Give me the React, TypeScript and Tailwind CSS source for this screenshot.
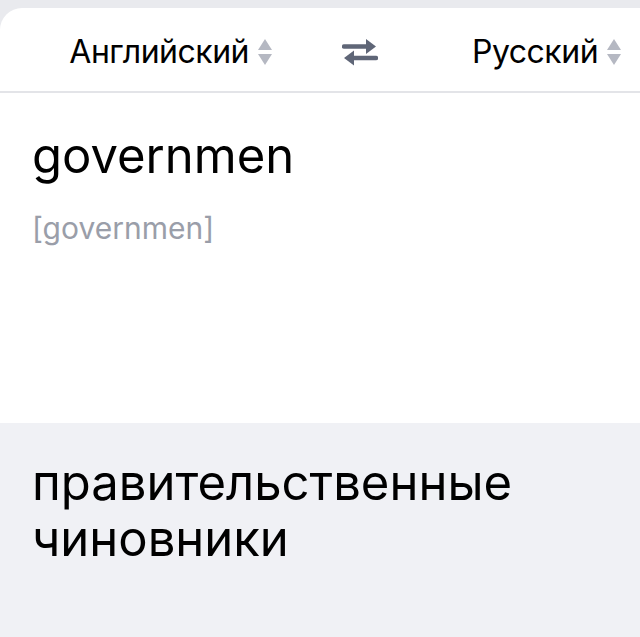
function SortIcon() {
  return (
    <svg width="16" height="28" viewBox="0 0 16 28" className="shrink-0">
      <path d="M8 1 L15 12 H1 Z" fill="#b5b8c2" />
      <path d="M8 27 L15 16 H1 Z" fill="#b5b8c2" />
    </svg>
  )
}

function SwapIcon() {
  return (
    <svg width="36" height="30" viewBox="0 0 36 30">
      <path d="M2 9.5 H27" stroke="#5f6677" strokeWidth="4.5" strokeLinecap="round" />
      <path d="M24 2 L34 9.5 L24 17 Z" fill="#5f6677" />
      <path d="M34 21 H9" stroke="#5f6677" strokeWidth="4.5" strokeLinecap="round" />
      <path d="M12 13.5 L2 21 L12 28.5 Z" fill="#5f6677" />
    </svg>
  )
}

export default function App() {
  return (
    <div className="min-h-[637px] w-[640px] bg-[#e9eaee] pt-2 font-['Inter','Roboto',sans-serif] text-black">
      <div className="rounded-tl-[22px] bg-white">
        {/* language picker */}
        <div className="flex h-[85px] items-center border-b-2 border-[#e3e4e8] pt-[4px]">
          <div className="flex w-[280px] items-center justify-end gap-[8px] pr-[7px]">
            <span className="text-[32px] tracking-[-0.5px]">Английский</span>
            <SortIcon />
          </div>
          <div className="flex w-[160px] justify-center">
            <SwapIcon />
          </div>
          <div className="flex items-center gap-[8px] pl-[32px]">
            <span className="text-[32px] tracking-[-0.5px]">Русский</span>
            <SortIcon />
          </div>
        </div>

        {/* source text */}
        <div className="h-[330px] px-8 pt-[35px]">
          <div className="text-[49px] leading-[56px]">governmen</div>
          <div className="mt-[24px] text-[30px] leading-[40px] text-[#9a9ea9]">[governmen]</div>
        </div>
      </div>

      {/* translation */}
      <div className="h-[214px] bg-[#f0f1f5] px-8 pt-[32px]">
        <div className="text-[49px] leading-[56px]">правительственные чиновники</div>
      </div>
    </div>
  )
}
